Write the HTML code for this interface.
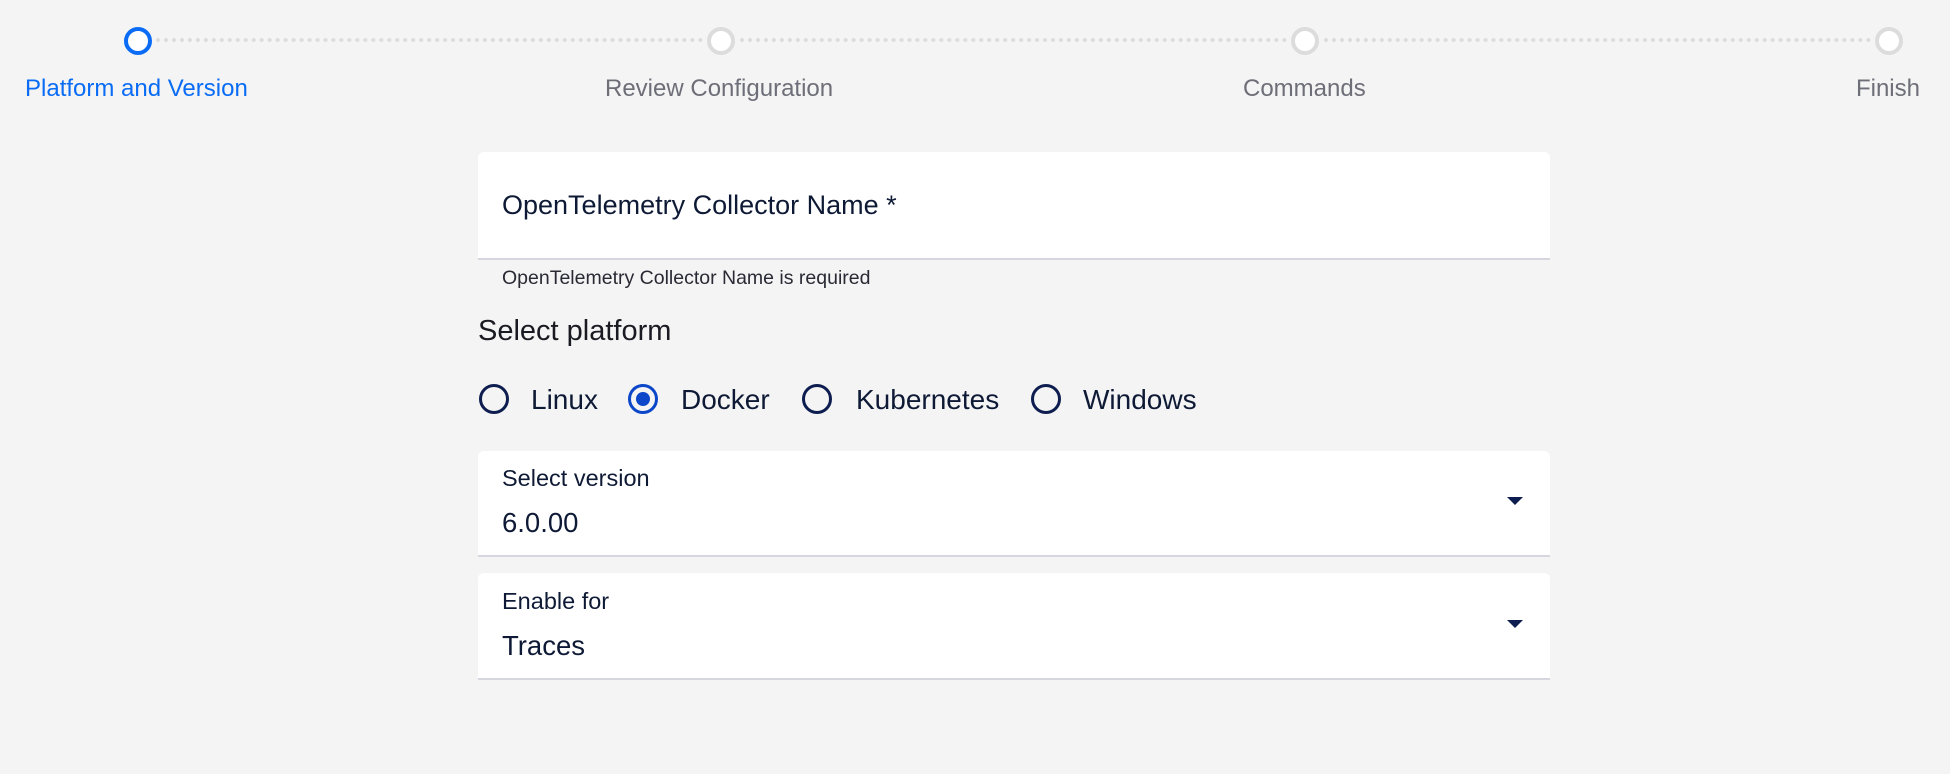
<!DOCTYPE html>
<html><head><style>
body{margin:0;width:1950px;height:774px;background:#f4f4f4;font-family:"Liberation Sans",sans-serif;position:relative;overflow:hidden;color:#0e1a35}
.a{position:absolute;white-space:nowrap}
.c{position:absolute;width:20px;height:20px;border:4px solid #dcdcdc;border-radius:50%;background:#fff;top:27px}
.dash{position:absolute;top:38px;height:0;border-top:4px dotted #dcdcdc}
.lbl{position:absolute;top:75px;font-size:24px;color:#6e6e78;white-space:nowrap}
.card{position:absolute;left:478px;width:1072px;background:#fff;border-radius:6px 6px 0 0;border-bottom:2px solid #d6d6de}
.r{position:absolute;width:24px;height:24px;border:3px solid #0e1d4f;border-radius:50%;top:384px}
.rl{position:absolute;top:384px;font-size:28px;white-space:nowrap}
.arrow{position:absolute;width:0;height:0;border-left:8px solid transparent;border-right:8px solid transparent;border-top:8px solid #0e1d4f}
</style></head><body>
<div class="dash" style="left:156px;width:547px"></div>
<div class="dash" style="left:740px;width:547px"></div>
<div class="dash" style="left:1324px;width:547px"></div>
<div class="c" style="left:124px;border-color:#0a6cf5"></div>
<div class="c" style="left:707px"></div>
<div class="c" style="left:1291px"></div>
<div class="c" style="left:1875px"></div>
<div class="lbl" style="left:25px;color:#0a6cf5">Platform and Version</div>
<div class="lbl" style="left:605px">Review Configuration</div>
<div class="lbl" style="left:1243px">Commands</div>
<div class="lbl" style="right:30px">Finish</div>

<div class="card" style="top:152px;height:106px"></div>
<div class="a" style="left:502px;top:190px;font-size:27px">OpenTelemetry Collector Name *</div>
<div class="a" style="left:502px;top:267px;font-size:19.5px;color:#2a2a35">OpenTelemetry Collector Name is required</div>
<div class="a" style="left:478px;top:315px;font-size:29px;color:#1a1a22">Select platform</div>

<div class="r" style="left:479px"></div><div class="rl" style="left:531px">Linux</div>
<div class="r" style="left:628px;border-color:#0b47c8"><div style="position:absolute;left:5px;top:5px;width:14px;height:14px;border-radius:50%;background:#0b47c8"></div></div><div class="rl" style="left:681px">Docker</div>
<div class="r" style="left:802px"></div><div class="rl" style="left:856px">Kubernetes</div>
<div class="r" style="left:1031px"></div><div class="rl" style="left:1083px">Windows</div>

<div class="card" style="top:451px;height:104px"></div>
<div class="a" style="left:502px;top:465px;font-size:23.5px">Select version</div>
<div class="a" style="left:502px;top:507px;font-size:27.5px">6.0.00</div>
<div class="arrow" style="left:1507px;top:497px"></div>

<div class="card" style="top:573px;height:105px"></div>
<div class="a" style="left:502px;top:588px;font-size:23.5px">Enable for</div>
<div class="a" style="left:502px;top:630px;font-size:27.5px">Traces</div>
<div class="arrow" style="left:1507px;top:620px"></div>
</body></html>
